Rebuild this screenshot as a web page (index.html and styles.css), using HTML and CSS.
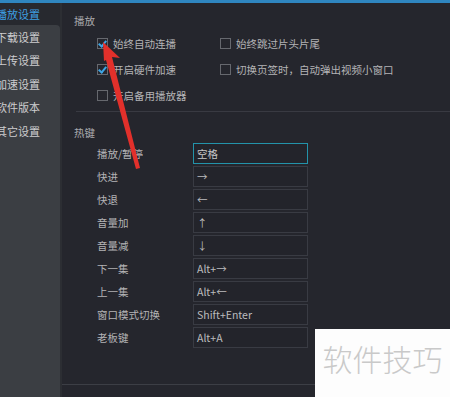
FILE: index.html
```html
<!DOCTYPE html>
<html lang="zh-CN">
<head>
<meta charset="UTF-8" />
<meta name="viewport" content="width=device-width, initial-scale=1" />
<link rel="stylesheet" href="styles.css">
</head>
<body>

<div class="app">
  <div class="topbar"></div>
  <div class="window">
    <div class="sidebar">
      <div class="side-item active"><span>播放设置</span></div>
      <div class="side-list">
        <div class="side-item"><span>下载设置</span></div>
        <div class="side-item"><span>上传设置</span></div>
        <div class="side-item"><span>加速设置</span></div>
        <div class="side-item"><span>软件版本</span></div>
        <div class="side-item"><span>其它设置</span></div>
      </div>
    </div>

    <div class="main">
      <div class="content">
        <div class="section-title">播放</div>
        <div class="options">
          <label class="opt"><span class="box checked"></span>始终自动连播</label>
          <label class="opt"><span class="box"></span>始终跳过片头片尾</label>
          <label class="opt"><span class="box checked"></span>开启硬件加速</label>
          <label class="opt"><span class="box"></span>切换页签时，自动弹出视频小窗口</label>
          <label class="opt"><span class="box"></span>开启备用播放器</label>
        </div>
        <div class="divider"></div>

        <div class="section-title hotkey-title">热键</div>
        <div class="hotkeys">
          <div class="hk"><span class="hk-label">播放/暂停</span><span class="hk-input focus">空格</span></div>
          <div class="hk"><span class="hk-label">快进</span><span class="hk-input">→</span></div>
          <div class="hk"><span class="hk-label">快退</span><span class="hk-input">←</span></div>
          <div class="hk"><span class="hk-label">音量加</span><span class="hk-input">↑</span></div>
          <div class="hk"><span class="hk-label">音量减</span><span class="hk-input">↓</span></div>
          <div class="hk"><span class="hk-label">下一集</span><span class="hk-input">Alt+→</span></div>
          <div class="hk"><span class="hk-label">上一集</span><span class="hk-input">Alt+←</span></div>
          <div class="hk"><span class="hk-label">窗口模式切换</span><span class="hk-input">Shift+Enter</span></div>
          <div class="hk"><span class="hk-label">老板键</span><span class="hk-input">Alt+A</span></div>
        </div>
      </div>
      <div class="footer"></div>
    </div>
  </div>

  <svg class="arrow" width="450" height="397" viewBox="0 0 450 397">
    <polygon points="103,42 120,58 112,57 140,168 136,169 106,60 104,61" fill="#e2302b" />
  </svg>

  <div class="watermark">软件技巧</div>
</div>

</body>
</html>
```

FILE: styles.css
```css
body {
  margin: 0;
  font-family: "Noto Sans CJK SC", "DejaVu Sans", sans-serif;
  font-size: 10.5px;
  background: #25262d;
  color: #b4b4b6;
}

.app {
  position: relative;
  width: 450px;
  height: 397px;
  overflow: hidden;
  display: flex;
  flex-direction: column;
}

.topbar {
  height: 3px;
  background: #2f86c0;
  flex-shrink: 0;
}

.window {
  flex: 1;
  display: flex;
}

/* sidebar */
.sidebar {
  width: 60px;
  flex-shrink: 0;
  display: flex;
  flex-direction: column;
  background: #27292f;
  border-right: 2px solid #2c2e33;
}

.side-list {
  flex: 1;
  background: #3b3e43;
  border-radius: 0 4px 0 0;
}

.side-item {
  height: 23.5px;
  display: flex;
  align-items: center;
  font-size: 11px;
  color: #cdcdcf;
  white-space: nowrap;
}

.side-item span {
  margin-left: -4px;
}

.side-item.active {
  height: 22px;
  color: #3d9fe2;
}

/* main */
.main {
  flex: 1;
  display: flex;
  flex-direction: column;
}

.content {
  flex: 1;
  padding: 11px 0 0 12px;
}

.section-title {
  line-height: 14px;
  color: #a9a9ac;
}

.options {
  display: grid;
  grid-template-columns: 123px auto;
  grid-auto-rows: 26px;
  margin-top: 2px;
  padding-left: 23px;
}

.opt {
  display: flex;
  align-items: center;
  gap: 5px;
  white-space: nowrap;
}

.box {
  width: 9px;
  height: 9px;
  border: 1px solid #66686e;
  position: relative;
  flex-shrink: 0;
}

.box.checked::after {
  content: "";
  position: absolute;
  left: 2px;
  top: 0;
  width: 3px;
  height: 6px;
  border: solid #3ea6e6;
  border-width: 0 2px 2px 0;
  transform: rotate(40deg);
}

.divider {
  height: 1px;
  background: #393a42;
  margin: 3px 0 0 2px;
}

.hotkey-title {
  margin-top: 14px;
}

.hotkeys {
  display: flex;
  flex-direction: column;
  gap: 2px;
  margin-top: 3px;
  padding-left: 23px;
}

.hk {
  display: flex;
  align-items: center;
  height: 21px;
}

.hk-label {
  width: 96px;
  flex-shrink: 0;
}

.hk-input {
  width: 110px;
  height: 19px;
  border: 1px solid #393b43;
  background: #23242b;
  display: flex;
  align-items: center;
  padding-left: 3px;
  box-sizing: content-box;
  color: #bcbcbe;
}

.hk-input.focus {
  border-color: #2393aa;
  color: #c8c8ca;
}

.footer {
  height: 12px;
  border-top: 1px solid #3c3e45;
}

/* overlays */
.arrow {
  position: absolute;
  left: 0;
  top: 0;
  pointer-events: none;
}

.watermark {
  position: absolute;
  right: 0;
  bottom: 0;
  width: 135px;
  height: 68px;
  background: #fdfdfd;
  color: #c9c9c9;
  font-size: 30px;
  font-weight: 300;
  display: flex;
  align-items: center;
  justify-content: center;
  padding-bottom: 10px;
  box-sizing: border-box;
}
```
